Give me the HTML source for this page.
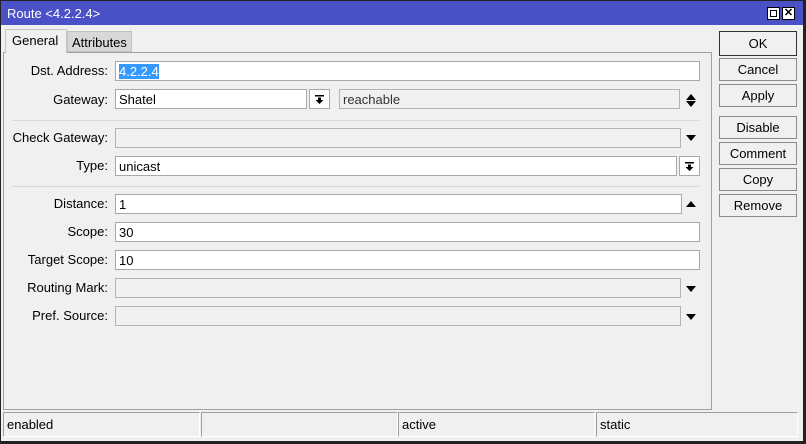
<!DOCTYPE html><html><head><style>
*{box-sizing:border-box;margin:0;padding:0}
body{width:806px;height:444px;background:#f0f0f0;font-family:"Liberation Sans",sans-serif;font-size:13px;color:#000;position:relative;overflow:hidden}
.a{position:absolute}
.win{left:0;top:0;width:806px;height:444px;border:1px solid #222;border-right:3px solid #222;border-bottom:3px solid #222}
.title{left:1px;top:1px;width:802px;height:24px;background:#4a50c6;color:#fff;font-size:13px;padding:5px 0 0 6px}
.lb{text-align:right;width:108px;left:0;line-height:20px}
.in{background:#fff;border:1px solid #a8a8a8;height:20px;padding:2px 3px;line-height:15px}
.gr{background:#f0f0f0;border:1px solid #b4b4b4;height:20px;padding:2px 3px;line-height:15px;color:#333}
.btn{left:719px;width:78px;height:23px;border:1px solid #8a8a8a;background:#f0f0f0;text-align:center;line-height:21px}
.dd{width:0;height:0;border-left:5px solid transparent;border-right:5px solid transparent;border-top:6px solid #000}
.du{width:0;height:0;border-left:5px solid transparent;border-right:5px solid transparent;border-bottom:6px solid #000}
.sep{left:12px;width:687px;height:1px;background:#d8d8d8}
.st{top:412px;height:25px;border:1px solid #a0a0a0;border-right-color:#fff;border-bottom-color:#fff;padding:4px 3px;line-height:15px}
.ib{background:#fff;border:1px solid #a8a8a8;height:20px;width:21px}
.ib svg{position:absolute;left:5px;top:5px}
</style></head><body>
<div class="a win"></div>
<div class="a title">Route &lt;4.2.2.4&gt;</div>
<div class="a" style="left:767px;top:7px;width:13px;height:13px;background:#fff;border:1px solid #000"><div style="margin:2px;width:7px;height:7px;border:1px solid #000"></div></div>
<div class="a" style="left:782px;top:7px;width:13px;height:13px;background:#fff;border:1px solid #000;font-size:11px;font-weight:bold;line-height:11px;text-align:center">✕</div>
<div class="a" style="left:3px;top:52px;width:709px;height:358px;border:1px solid #a0a0a0"></div>
<div class="a" style="left:5px;top:29px;width:62px;height:24px;background:#f0f0f0;border:1px solid #c8c8c8;border-bottom:none;padding:3px 0 0 6px">General</div>
<div class="a" style="left:67px;top:31px;width:65px;height:21px;background:#d8d8d8;border:1px solid #c0c0c0;padding:3px 0 0 4px">Attributes</div>
<div class="a lb" style="top:61px">Dst. Address:</div>
<div class="a in" style="left:115px;top:61px;width:585px"><span style="background:#3399ff;color:#fff">4.2.2.4</span></div>
<div class="a lb" style="top:90px">Gateway:</div>
<div class="a in" style="left:115px;top:89px;width:192px">Shatel</div>
<div class="a ib" style="left:309px;top:89px"><svg width="9" height="9"><rect x="0" y="0" width="9" height="1.5" fill="#000"/><path d="M3 2.5h3v2.5h2.5L4.5 9 .5 5H3z" fill="#000"/></svg></div>
<div class="a gr" style="left:339px;top:89px;width:341px">reachable</div>
<div class="a du" style="left:686px;top:94px"></div><div class="a dd" style="left:686px;top:101px"></div>
<div class="a sep" style="top:120px"></div>
<div class="a lb" style="top:128px">Check Gateway:</div>
<div class="a gr" style="left:115px;top:128px;width:566px"></div>
<div class="a dd" style="left:686px;top:135px"></div>
<div class="a lb" style="top:156px">Type:</div>
<div class="a in" style="left:115px;top:156px;width:562px">unicast</div>
<div class="a ib" style="left:679px;top:156px"><svg width="9" height="9"><rect x="0" y="0" width="9" height="1.5" fill="#000"/><path d="M3 2.5h3v2.5h2.5L4.5 9 .5 5H3z" fill="#000"/></svg></div>
<div class="a sep" style="top:186px"></div>
<div class="a lb" style="top:194px">Distance:</div>
<div class="a in" style="left:115px;top:194px;width:567px">1</div>
<div class="a du" style="left:686px;top:201px"></div>
<div class="a lb" style="top:222px">Scope:</div>
<div class="a in" style="left:115px;top:222px;width:585px">30</div>
<div class="a lb" style="top:250px">Target Scope:</div>
<div class="a in" style="left:115px;top:250px;width:585px">10</div>
<div class="a lb" style="top:278px">Routing Mark:</div>
<div class="a gr" style="left:115px;top:278px;width:566px"></div>
<div class="a dd" style="left:686px;top:286px"></div>
<div class="a lb" style="top:306px">Pref. Source:</div>
<div class="a gr" style="left:115px;top:306px;width:566px"></div>
<div class="a dd" style="left:686px;top:314px"></div>
<div class="a btn" style="top:31px;height:25px;border-color:#333;line-height:23px">OK</div>
<div class="a btn" style="top:58px">Cancel</div>
<div class="a btn" style="top:84px">Apply</div>
<div class="a btn" style="top:116px">Disable</div>
<div class="a btn" style="top:142px">Comment</div>
<div class="a btn" style="top:168px">Copy</div>
<div class="a btn" style="top:194px">Remove</div>
<div class="a st" style="left:3px;width:197px">enabled</div>
<div class="a st" style="left:201px;width:197px"></div>
<div class="a st" style="left:398px;width:197px">active</div>
<div class="a st" style="left:596px;width:202px">static</div>
</body></html>
